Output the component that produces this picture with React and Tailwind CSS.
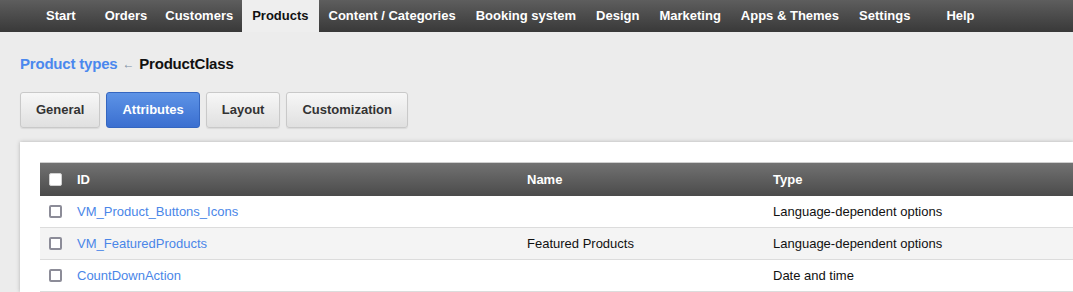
const navItems = [
  "Start",
  "Orders",
  "Customers",
  "Products",
  "Content / Categories",
  "Booking system",
  "Design",
  "Marketing",
  "Apps & Themes",
  "Settings",
  "Help",
];

const tabs = ["General", "Attributes", "Layout", "Customization"];

const rows = [
  { id: "VM_Product_Buttons_Icons", name: "", type: "Language-dependent options" },
  { id: "VM_FeaturedProducts", name: "Featured Products", type: "Language-dependent options" },
  { id: "CountDownAction", name: "", type: "Date and time" },
];

const early = ["Start", "Orders", "Customers"];

function Checkbox({ header }) {
  return (
    <span
      className={
        header
          ? "block w-[13px] h-[13px] bg-white border border-[#d0d0d0] rounded-[2px]"
          : "block w-[13px] h-[13px] bg-white border-2 border-[#8c8c98] rounded-[2px]"
      }
    />
  );
}

export default function App() {
  return (
    <div className="min-h-screen bg-[#ececec] font-['Liberation_Sans',Arial,sans-serif] overflow-hidden">
      {/* top nav */}
      <nav className="h-[32px] flex items-stretch pl-[37px] bg-gradient-to-b from-[#5e5e5e] to-[#393939] text-[13px] font-bold text-white">
        {navItems.map((item) => (
          <a
            key={item}
            className={
              (item === "Products"
                ? "bg-[#eeeeee] text-[#111] px-[10px] "
                : early.includes(item)
                ? "px-[9px] "
                : "px-[10px] ") +
              (item === "Start" ? "mr-[11px] " : "") +
              (item === "Help" ? "ml-[16px] " : "") +
              "flex items-center whitespace-nowrap"
            }
          >
            {item}
          </a>
        ))}
      </nav>

      {/* breadcrumb */}
      <div className="flex items-center gap-[5px] px-[20px] pt-[22px] text-[15px] font-bold leading-[20px] tracking-[-0.2px]">
        <a className="text-[#4a88ee]">Product types</a>
        <span className="text-[#7d8da5] text-[12px] font-normal">←</span>
        <span className="text-[#111]">ProductClass</span>
      </div>

      {/* tabs */}
      <div className="flex gap-[6px] px-[20px] pt-[18px]">
        {tabs.map((t) => (
          <button
            key={t}
            className={
              t === "Attributes"
                ? "h-[36px] px-[15px] rounded-[3px] border border-[#3466c0] bg-gradient-to-b from-[#5d93e6] to-[#3b6fd0] text-white text-[13px] font-bold"
                : "h-[36px] px-[15px] rounded-[3px] border border-[#c9c9c9] bg-gradient-to-b from-[#f7f7f7] to-[#e0e0e0] text-[#333] text-[13px] font-bold shadow-[0_1px_1px_rgba(0,0,0,0.08)]"
            }
          >
            {t}
          </button>
        ))}
      </div>

      {/* card */}
      <div className="ml-[20px] mt-[14px] bg-white pl-[20px] pt-[20px] shadow-[0_0_4px_rgba(0,0,0,0.25)]">
        <div className="text-[13px]">
          <div className="grid grid-cols-[27px_450px_246px_1fr] h-[34px] items-center border-t border-[#cfcfcf] bg-gradient-to-b from-[#727272] to-[#4b4b4b] text-white font-bold">
            <div className="pl-[9px]">
              <Checkbox header />
            </div>
            <div className="pl-[10px]">ID</div>
            <div className="pl-[10px]">Name</div>
            <div className="pl-[10px]">Type</div>
          </div>
          {rows.map((r, i) => (
            <div
              key={r.id}
              className={
                (i % 2 === 1 ? "bg-[#f4f4f4] " : "bg-white ") +
                "grid grid-cols-[27px_450px_246px_1fr] h-[32px] items-center border-b border-[#dcdcdc] text-[#111]"
              }
            >
              <div className="pl-[9px]">
                <Checkbox />
              </div>
              <div className="pl-[10px]">
                <a className="text-[#4a86e8]">{r.id}</a>
              </div>
              <div className="pl-[10px]">{r.name}</div>
              <div className="pl-[10px]">{r.type}</div>
            </div>
          ))}
        </div>
      </div>
    </div>
  );
}
